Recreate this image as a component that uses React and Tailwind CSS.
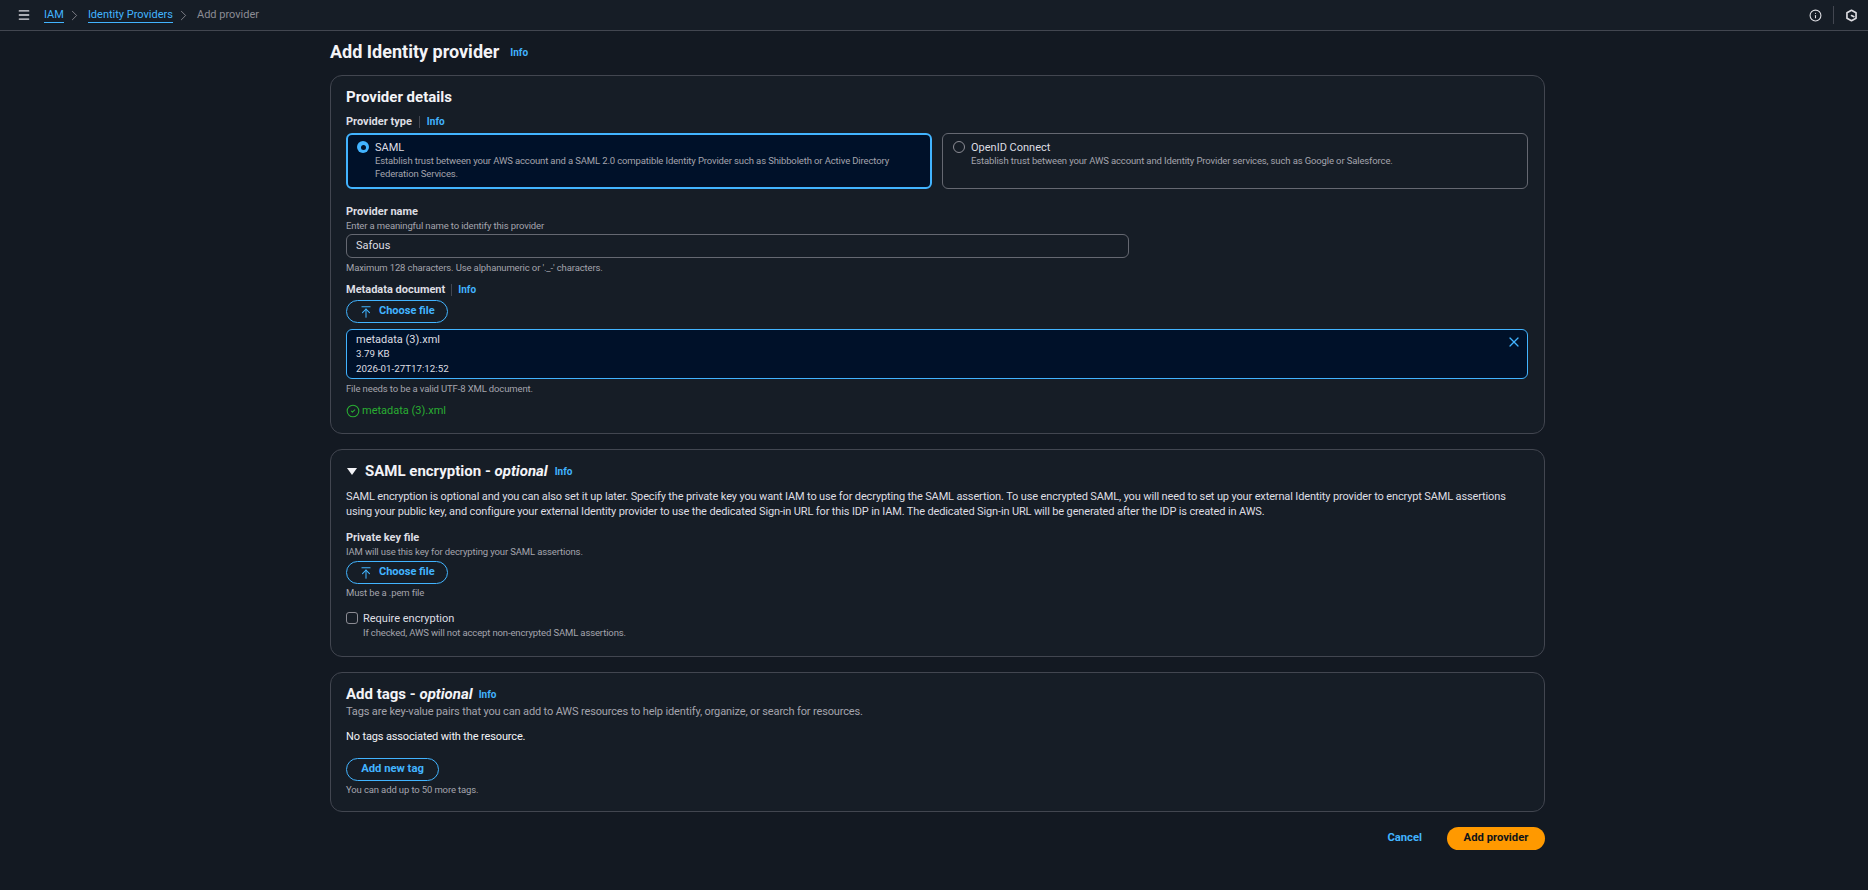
import React from 'react';
import { ChevronRight, Menu, X, Info, ArrowUpToLine, CircleCheck } from 'lucide-react';

const InfoLink = ({ className = '' }) => (
  <span className={`text-[10px] font-bold leading-3 text-[#42b4ff] ${className}`}>Info</span>
);

const ChooseFile = ({ className = '' }) => (
  <button className={`flex h-[23px] w-[102px] items-center gap-[6px] rounded-full border border-[#42b4ff] pl-[12px] text-[11px] font-bold text-[#42b4ff] ${className}`}>
    <ArrowUpToLine size={14} strokeWidth={1.8} />
    <span>Choose file</span>
  </button>
);

const Card = ({ className = '', children }) => (
  <section className={`rounded-[12px] border border-[#424650] bg-[#161d26] px-[15px] ${className}`}>{children}</section>
);

const Tile = ({ title, text, selected, className = '' }) => (
  <div className={`flex h-[56px] gap-[6px] rounded-[6px] pl-[9px] pt-[6px] ${selected ? 'border-2 border-[#42b4ff] bg-[#001129]' : 'border border-[#656871] pl-[10px] pt-[7px]'} ${className}`}>
    {selected ? (
      <span className="flex h-[12px] w-[12px] shrink-0 items-center justify-center rounded-full bg-[#42b4ff]">
        <span className="h-[5px] w-[5px] rounded-full bg-[#001129]" />
      </span>
    ) : (
      <span className="h-[12px] w-[12px] shrink-0 rounded-full border border-[#8c8c94]" />
    )}
    <div>
      <div className="text-[11px] leading-[14px] text-[#dedee3]">{title}</div>
      <p className="text-[9.5px] leading-[12.5px] tracking-[-0.13px] text-[#a4a4ad]">{text}</p>
    </div>
  </div>
);

const Help = ({ className = '', children }) => (
  <div className={`text-[9.5px] leading-[14px] tracking-[-0.13px] text-[#a4a4ad] ${className}`}>{children}</div>
);

export default function App() {
  return (
    <div className="min-h-[890px] bg-[#131922] font-['Roboto',sans-serif] text-[#dedee3]">
      <header className="flex h-[31px] items-center border-b border-[#424650] bg-[#161d26] pl-[17px] pr-[10px] text-[11px]">
        <Menu size={14} strokeWidth={2.4} className="text-[#dedee3]" />
        <nav className="ml-[13px] flex items-center">
          <a className="border-b border-[#42b4ff] leading-[15px] text-[#42b4ff]">IAM</a>
          <ChevronRight size={17} strokeWidth={1.2} className="mx-[2px] text-[#8c8c94]" />
          <a className="ml-[3px] border-b border-[#42b4ff] leading-[15px] text-[#42b4ff]">Identity Providers</a>
          <ChevronRight size={17} strokeWidth={1.2} className="mx-[2px] text-[#8c8c94]" />
          <span className="ml-[3px] text-[#8c8c94]">Add provider</span>
        </nav>
        <div className="ml-auto flex items-center">
          <Info size={13} strokeWidth={2} className="text-[#dedee3]" />
          <span className="mx-[11px] h-[18px] w-px bg-[#424650]" />
          <svg width="13" height="13" viewBox="0 0 16 16" fill="none" stroke="#dedee3" strokeWidth="2" strokeLinejoin="round">
            <path d="M8 1.5 13.6 4.7V11.3L8 14.5 2.4 11.3V4.7Z" />
            <path d="M8 8 11 9.5" strokeLinecap="round" />
          </svg>
        </div>
      </header>

      <main className="ml-[330px] w-[1215px]">
        <div className="flex h-[44px] items-start pt-[11px]">
          <h1 className="text-[18px] font-bold leading-5 text-[#f3f3f7]">Add Identity provider</h1>
          <InfoLink className="ml-[11px] mt-[5px]" />
        </div>

        <Card className="h-[359px] pt-[11px]">
          <h2 className="text-[15px] font-bold leading-5 text-[#f3f3f7]">Provider details</h2>
          <div className="mt-[8px] flex h-[14px] items-center">
            <span className="text-[11px] font-bold text-[#dedee3]">Provider type</span>
            <span className="mx-[7px] h-[12px] w-px bg-[#424650]" />
            <InfoLink />
          </div>
          <div className="mt-[4px] flex gap-[10px]">
            <Tile
              selected
              className="w-[586px]"
              title="SAML"
              text="Establish trust between your AWS account and a SAML 2.0 compatible Identity Provider such as Shibboleth or Active Directory Federation Services."
            />
            <Tile
              className="w-[586px]"
              title="OpenID Connect"
              text="Establish trust between your AWS account and Identity Provider services, such as Google or Salesforce."
            />
          </div>

          <div className="mt-[16px] text-[11px] font-bold leading-[14px]">Provider name</div>
          <Help>Enter a meaningful name to identify this provider</Help>
          <div className="mt-[1px] flex h-[24px] w-[783px] items-center rounded-[6px] border border-[#656871] pl-[9px] text-[11px] text-[#dedee3]">Safous</div>
          <Help className="mt-[3px]">Maximum 128 characters. Use alphanumeric or '._-' characters.</Help>

          <div className="mt-[8px] flex h-[14px] items-center">
            <span className="text-[11px] font-bold text-[#dedee3]">Metadata document</span>
            <span className="mx-[6px] h-[12px] w-px bg-[#424650]" />
            <InfoLink />
          </div>
          <ChooseFile className="mt-[3px]" />
          <div className="mt-[6px] flex h-[50px] w-[1182px] items-start justify-between rounded-[6px] border border-[#42b4ff] bg-[#001129] pl-[9px] pr-[5px] pt-[3px]">
            <div>
              <div className="text-[11px] leading-[14px]">metadata (3).xml</div>
              <div className="text-[9.75px] leading-[14px]">3.79 KB</div>
              <div className="text-[9.75px] leading-[15px]">2026-01-27T17:12:52</div>
            </div>
            <X size={16} strokeWidth={1.8} className="mt-[1px] text-[#42b4ff]" />
          </div>
          <Help className="mt-[3px]">File needs to be a valid UTF-8 XML document.</Help>
          <div className="mt-[7px] flex items-center gap-[2px] text-[11px] leading-[16px] text-[#29ad32]">
            <CircleCheck size={14} strokeWidth={1.8} />
            <span>metadata (3).xml</span>
          </div>
        </Card>

        <Card className="mt-[15px] h-[208px] pt-[11px]">
          <div className="flex items-center">
            <span className="ml-[1px] h-0 w-0 border-x-[5px] border-t-[7px] border-x-transparent border-t-[#f3f3f7]" />
            <h2 className="ml-[8px] text-[15px] font-bold leading-5 text-[#f3f3f7]">SAML encryption - <em>optional</em></h2>
            <InfoLink className="ml-[7px] mt-[2px]" />
          </div>
          <p className="mt-[8px] text-[11px] leading-[15px] tracking-[-0.14px] text-[#dedee3]">
            SAML encryption is optional and you can also set it up later. Specify the private key you want IAM to use for decrypting the SAML assertion. To use encrypted SAML, you will need to set up your external Identity provider to encrypt SAML assertions using your public key, and configure your external Identity provider to use the dedicated Sign-in URL for this IDP in IAM. The dedicated Sign-in URL will be generated after the IDP is created in AWS.
          </p>
          <div className="mt-[11px] text-[11px] font-bold leading-[15px]">Private key file</div>
          <Help>IAM will use this key for decrypting your SAML assertions.</Help>
          <ChooseFile className="mt-[2px]" />
          <Help className="mt-[2px]">Must be a .pem file</Help>
          <div className="mt-[11px] flex gap-[5px]">
            <span className="mt-[1px] h-[12px] w-[12px] rounded-[3px] border border-[#8c8c94]" />
            <div>
              <div className="text-[11px] leading-[15px]">Require encryption</div>
              <Help>If checked, AWS will not accept non-encrypted SAML assertions.</Help>
            </div>
          </div>
        </Card>

        <Card className="mt-[15px] h-[140px] pt-[11px]">
          <div className="flex items-center">
            <h2 className="text-[15px] font-bold leading-5 text-[#f3f3f7]">Add tags - <em>optional</em></h2>
            <InfoLink className="ml-[6px] mt-[2px]" />
          </div>
          <p className="text-[11px] leading-[15px] tracking-[-0.14px] text-[#a4a4ad]">Tags are key-value pairs that you can add to AWS resources to help identify, organize, or search for resources.</p>
          <p className="mt-[10px] text-[11px] leading-[15px] tracking-[-0.14px] text-[#f3f3f7]">No tags associated with the resource.</p>
          <button className="mt-[14px] block h-[23px] w-[93px] rounded-full border border-[#42b4ff] text-[11.25px] font-bold text-[#42b4ff]">Add new tag</button>
          <Help className="mt-[2px]">You can add up to 50 more tags.</Help>
        </Card>

        <div className="mt-[15px] flex items-center justify-end">
          <button className="text-[11.25px] font-bold text-[#42b4ff]">Cancel</button>
          <button className="ml-[25px] h-[23px] w-[98px] rounded-full bg-[#ff9900] text-[11.25px] font-bold text-[#0f141a]">Add provider</button>
        </div>
      </main>
    </div>
  );
}
